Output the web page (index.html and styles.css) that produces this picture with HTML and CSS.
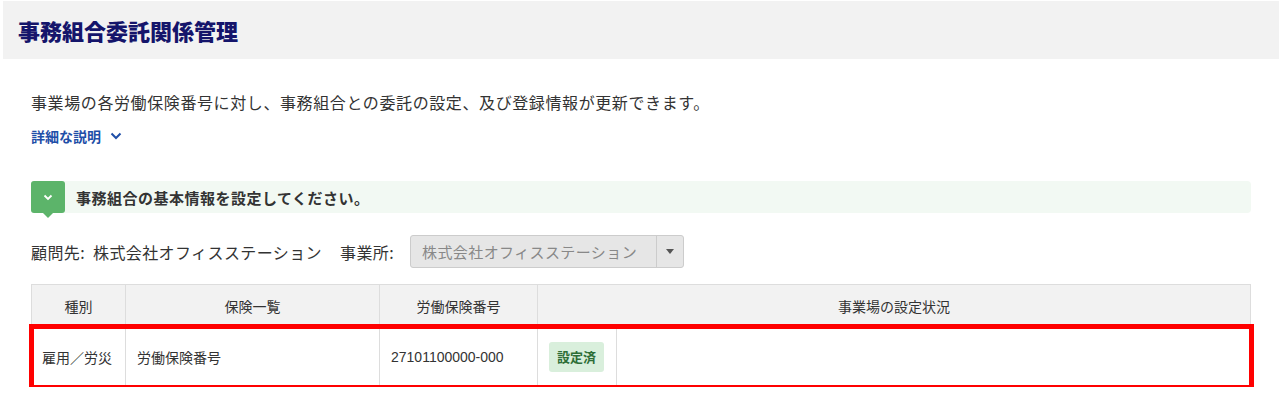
FILE: index.html
```html
<!DOCTYPE html>
<html lang="ja">
    <head>
        <meta charset="utf-8">
        <link rel="stylesheet" href="styles.css">
        <title>事務組合委託関係管理</title>
    </head>
    <body>

<div class="page-head"> <!-- title band -->
    <h1 class="page-title">事務組合委託関係管理</h1>
</div>

<div class="container">
    <p class="lead">事業場の各労働保険番号に対し、事務組合との委託の設定、及び登録情報が更新できます。</p>

    <a class="more" href="#">詳細な説明
        <svg class="more-icon" width="12" height="8" viewBox="0 0 12 8"><path d="M1.5 1.5 L6 6 L10.5 1.5" fill="none" stroke="#1f4fa8" stroke-width="2"/></svg>
    </a>

    <div class="notice">
        <span class="notice-icon">
            <svg width="10" height="7" viewBox="0 0 10 7"><path d="M1.5 1.5 L5 5 L8.5 1.5" fill="none" stroke="#fff" stroke-width="1.8"/></svg>
        </span>
        <span class="notice-text">事務組合の基本情報を設定してください。</span>
    </div>

    <div class="filter">
        <span>顧問先:&nbsp; 株式会社オフィスステーション</span>
        <span class="filter-label">事業所:</span>
        <div class="select">
            <span class="select-value">株式会社オフィスステーション</span>
            <span class="select-arrow"></span>
        </div>
    </div>

    <table class="list">
        <thead>
            <tr>
                <th class="col-type">種別</th>
                <th class="col-ins">保険一覧</th>
                <th class="col-no">労働保険番号</th>
                <th colspan="2">事業場の設定状況</th>
            </tr>
        </thead>
        <tbody>
            <tr class="marked">
                <td>雇用／労災</td>
                <td>労働保険番号</td>
                <td class="num">27101100000-000</td>
                <td class="col-badge"><span class="badge">設定済</span></td>
                <td></td>
            </tr>
        </tbody>
    </table>
</div>

    </body>
</html>
```

FILE: styles.css
```css
* {
    box-sizing: border-box;
}

body {
    margin: 0;
    font-family: 'Noto Sans CJK JP', 'Noto Sans', sans-serif;
    color: #333;
    background: #fff;
}

/* title band */
.page-head {
    margin: 1px 1px 0 3px;
    height: 58px;
    background: #f2f2f2;
    padding-left: 15px;
    display: flex;
    align-items: center;
}

.page-title {
    margin: 0;
    font-size: 22px;
    font-weight: 900;
    color: #15156b;
    line-height: 1;
}

.container {
    padding: 0 29px 0 31px;
}

.lead {
    margin: 32px 0 0 0;
    font-size: 16px;
    letter-spacing: 0.6px;
    line-height: 22px;
}

.more {
    display: inline-flex;
    align-items: center;
    gap: 9px;
    margin-top: 13px;
    font-size: 14px;
    font-weight: 700;
    color: #1f4fa8;
    text-decoration: none;
    line-height: 20px;
}

.notice {
    margin-top: 34px;
    height: 32px;
    background: #f2f9f3;
    border-radius: 4px;
    display: flex;
    align-items: center;
}

.notice-icon {
    position: relative;
    width: 34px;
    height: 32px;
    background: #5cb46a;
    border-radius: 3px;
    display: flex;
    align-items: center;
    justify-content: center;
}

.notice-icon::after {
    content: "";
    position: absolute;
    left: 12px;
    bottom: -5px;
    border-left: 5px solid transparent;
    border-right: 5px solid transparent;
    border-top: 5px solid #5cb46a;
}

.notice-text {
    margin-left: 11px;
    font-size: 15px;
    font-weight: 700;
    letter-spacing: 0.5px;
    color: #333;
}

.filter {
    margin-top: 22px;
    display: flex;
    align-items: center;
    font-size: 16px;
    letter-spacing: 0.4px;
}

.filter-label {
    margin-left: 18px;
    margin-right: 16px;
}

.select {
    width: 274px;
    height: 33px;
    background: #e6e6e6;
    border: 1px solid #ccc;
    border-radius: 3px;
    display: flex;
    align-items: center;
}

.select-value {
    flex: 1;
    padding-left: 11px;
    color: #888;
    font-size: 15px;
    letter-spacing: 0.4px;
}

.select-arrow {
    width: 27px;
    height: 100%;
    border-left: 1px solid #ccc;
    display: flex;
    align-items: center;
    justify-content: center;
}

.select-arrow::after {
    content: "";
    border-left: 4px solid transparent;
    border-right: 4px solid transparent;
    border-top: 5px solid #555;
}

/* table */
.list {
    margin-top: 16px;
    width: 100%;
    border-collapse: collapse;
    font-size: 14px;
}

.list th {
    height: 42px;
    background: #f2f2f2;
    font-weight: 400;
    border: 1px solid #ddd;
}

.list td {
    height: 60px;
    border: 1px solid #ddd;
    padding: 0 11px;
}

.col-type { width: 94px; }
.col-ins { width: 254px; }
.col-no { width: 158px; }
.col-badge { width: 79px; }

.list td:first-child {
    padding: 0 0 0 10px;
}

.num {
    font-family: 'Liberation Sans', Arial, sans-serif;
}

.badge {
    display: inline-block;
    width: 55px;
    height: 30px;
    line-height: 30px;
    text-align: center;
    background: #d9efdc;
    color: #2d6e37;
    font-weight: 700;
    font-size: 13px;
    border-radius: 3px;
}

.marked {
    outline: 5px solid #ff0000;
    outline-offset: -2px;
}
```
